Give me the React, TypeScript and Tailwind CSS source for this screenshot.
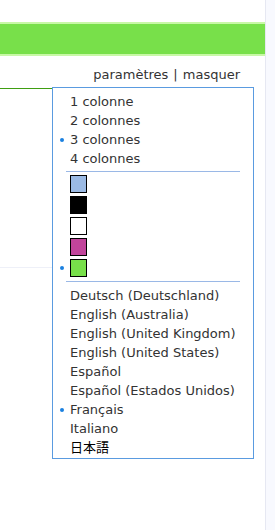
import React from 'react';

const columns = ['1 colonne', '2 colonnes', '3 colonnes', '4 colonnes'];
const swatches = ['bg-[#9bbae4]', 'bg-black', 'bg-white', 'bg-[#c1449b]', 'bg-[#78e04a]'];
const languages = [
  'Deutsch (Deutschland)',
  'English (Australia)',
  'English (United Kingdom)',
  'English (United States)',
  'Español',
  'Español (Estados Unidos)',
  'Français',
  'Italiano',
  '日本語',
];

const Dot: React.FC<{ on: boolean }> = ({ on }) => (
  <span className={`w-[4px] h-[4px] rounded-full shrink-0 ${on ? 'bg-[#1a80e0]' : 'bg-transparent'}`} />
);

const Row: React.FC<{ on?: boolean; children: React.ReactNode; dark?: boolean }> = ({ on = false, dark = false, children }) => (
  <div className="flex items-center h-[19px] pl-[7px] gap-[6px] whitespace-nowrap">
    <Dot on={on} />
    <span className={dark ? 'text-black' : ''}>{children}</span>
  </div>
);

export default function App() {
  return (
    <div
      className="flex h-[530px] w-[275px] bg-white text-[13px] text-[#333] overflow-hidden"
      style={{ fontFamily: '"DejaVu Sans", Verdana, "Noto Sans CJK JP", sans-serif' }}
    >
      <div className="w-[265px] shrink-0">
        <div className="h-[22px]" />
        <div className="h-[34px] bg-[#78e04a] border-y-2 border-[#c8f8a6]" />
        <div className="flex justify-end pr-[25px] pt-[11px] h-[31px] leading-[16px]">
          <span>paramètres</span>
          <span className="mx-[5px]">|</span>
          <span>masquer</span>
        </div>

        <div className="flex">
          <div className="w-[52px] shrink-0">
            <div className="mt-[1px] h-px bg-[#3f9e12]" />
            <div className="mt-[178px] h-px bg-[#eef0f8]" />
          </div>

          <div className="w-[202px] h-[372px] border border-[#5a9be0] bg-white pt-[4px]">
            {columns.map((c, i) => (
              <Row key={c} on={i === 2}>
                {c}
              </Row>
            ))}

            <div className="mx-[13px] mt-[3px] mb-[3px] h-px bg-[#9ab8e6]" />

            <div className="flex flex-col gap-[3px]">
              {swatches.map((s, i) => (
                <div key={s} className="flex items-center h-[18px] pl-[7px] gap-[6px]">
                  <Dot on={i === 4} />
                  <span className={`w-[17px] h-[18px] border border-black ${s}`} />
                </div>
              ))}
            </div>

            <div className="mx-[13px] mt-[4px] mb-[4px] h-px bg-[#9ab8e6]" />

            {languages.map((l) => (
              <Row key={l} on={l === 'Français'} dark={l === '日本語'}>
                {l}
              </Row>
            ))}
          </div>
        </div>
      </div>

      <div className="flex-1 border-l border-[#e6e8f2] bg-[#f8f9fe]" />
    </div>
  );
}
